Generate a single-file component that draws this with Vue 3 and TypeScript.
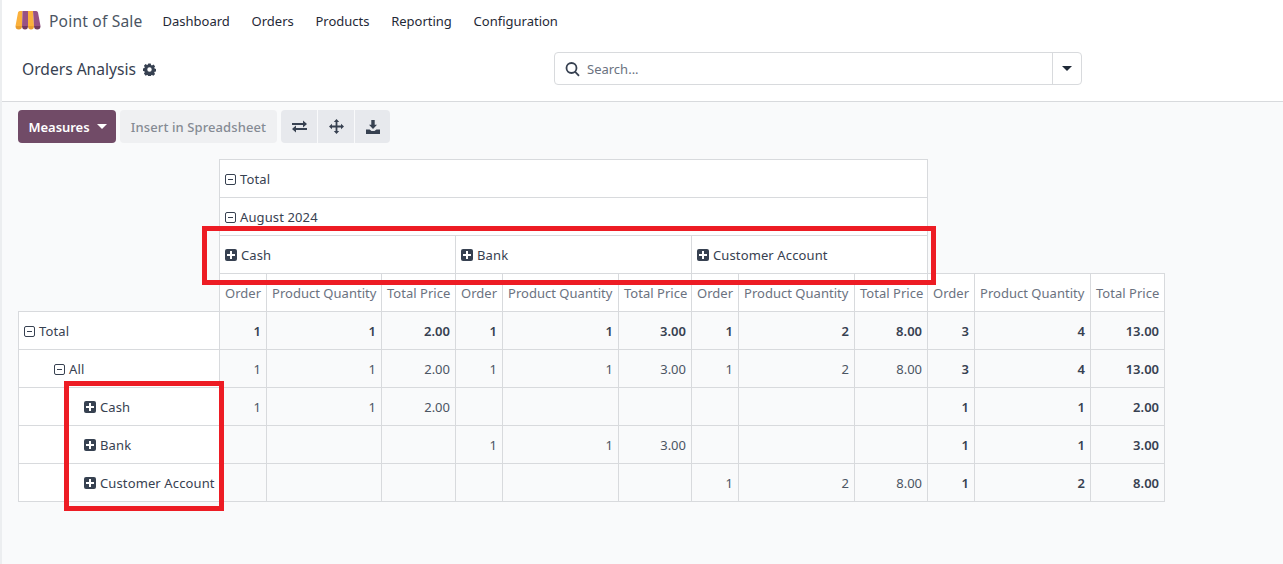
<script setup lang="ts">
interface Row { label: string; indent: string; open: boolean; bold: boolean; values: string[] }
const measures = ['Order', 'Product Quantity', 'Total Price']
const headerCols = [...measures, ...measures, ...measures, ...measures]
const groups = ['Cash', 'Bank', 'Customer Account']
const widths = [201, 47, 115, 74, 47, 116, 73, 47, 116, 73, 47, 116, 74]
const rows: Row[] = [
  { label: 'Total', indent: 'i0', open: true, bold: true, values: ['1','1','2.00','1','1','3.00','1','2','8.00','3','4','13.00'] },
  { label: 'All', indent: 'i1', open: true, bold: false, values: ['1','1','2.00','1','1','3.00','1','2','8.00','3','4','13.00'] },
  { label: 'Cash', indent: 'i2', open: false, bold: false, values: ['1','1','2.00','','','','','','','1','1','2.00'] },
  { label: 'Bank', indent: 'i2', open: false, bold: false, values: ['','','','1','1','3.00','','','','1','1','3.00'] },
  { label: 'Customer Account', indent: 'i2', open: false, bold: false, values: ['','','','','','','1','2','8.00','1','2','8.00'] },
]
</script>

<template>
  <div class="app">
    <header class="topbar">
      <svg class="logo" width="26" height="19" viewBox="0 0 26 19">
        <path d="M5 0h2.500L7 15H0.500L3 1.500A2 2 0 0 1 5 0z" fill="#fbb13c" />
        <path d="M7.500 0H13v15H7z" fill="#985184" />
        <path d="M13 0h5l1 15h-6z" fill="#fbb13c" />
        <path d="M18 0h3a2 2 0 0 1 2 1.500L25.500 15H19z" fill="#985184" />
        <path d="M0.500 15H7a3.250 3.500 0 0 1-6.500 0z" fill="#e99d2e" />
        <path d="M7 15h6a3 3.500 0 0 1-6 0z" fill="#71395f" />
        <path d="M13 15h6a3 3.500 0 0 1-6 0z" fill="#e99d2e" />
        <path d="M19 15h6.500a3.250 3.500 0 0 1-6.500 0z" fill="#71395f" />
      </svg>
      <span class="brand">Point of Sale</span>
      <nav class="menu">
        <span>Dashboard</span><span>Orders</span><span>Products</span><span>Reporting</span><span>Configuration</span>
      </nav>
    </header>

    <section class="panel">
      <div class="title">
        <span>Orders Analysis</span>
        <svg width="13" height="13" viewBox="0 0 14 14" class="gear">
          <path fill="#374151" fill-rule="evenodd" d="M5.700.5h2.600l.4 1.700 1 .4 1.500-.9 1.800 1.800-.9 1.500.4 1 1.700.4v2.600l-1.700.4-.4 1 .9 1.500-1.800 1.800-1.500-.9-1 .4-.4 1.700H5.700l-.4-1.700-1-.4-1.500.9L1 11.400l.9-1.500-.4-1L-.2 8.500V5.900l1.700-.4.4-1L1 3l1.800-1.800 1.500.9 1-.4zM7 4.700a2.400 2.400 0 1 0 0 4.800 2.400 2.400 0 0 0 0-4.800z" />
        </svg>
      </div>
      <div class="search">
        <div class="search-main">
          <svg width="16" height="16" viewBox="0 0 16 16" fill="none" stroke="#374151" stroke-width="1.800">
            <circle cx="6.500" cy="7" r="5" /><path d="M10 10.600 14 14.800" />
          </svg>
          <span>Search...</span>
        </div>
        <div class="search-drop"><i class="caret dark"></i></div>
      </div>
    </section>

    <main class="content">
      <div class="toolbar">
        <button class="btn primary">Measures<i class="caret"></i></button>
        <button class="btn muted">Insert in Spreadsheet</button>
        <div class="btn-group">
          <button class="btn icon">
            <svg width="15" height="13" viewBox="0 0 15 13" fill="#374151"><path d="M0 3h11V0.500L15 4l-4 3.500V5H0zM15 8H4V5.500L0 9l4 3.500V10h11z" /></svg>
          </button>
          <button class="btn icon">
            <svg width="15" height="15" viewBox="0 0 15 15" fill="#374151"><path d="M7.500 0 10.200 3H8.400v3.600H12V4.800L15 7.500 12 10.200V8.400H8.400V12H10.200L7.500 15 4.800 12H6.600V8.400H3V10.200L0 7.500 3 4.800V6.600H6.600V3H4.800z" /></svg>
          </button>
          <button class="btn icon last">
            <svg width="14" height="14" viewBox="0 0 14 14" fill="#374151"><path d="M5.300 0h3.400v4.800H11L7 9 3 4.800h2.300zM0 9.500h3.600L5.500 11h3l1.900-1.500H14V14H0z" /></svg>
          </button>
        </div>
      </div>

      <div class="pivot-wrap">
        <table class="pivot">
          <colgroup><col v-for="(w, i) in widths" :key="i" :style="{ width: w + 'px' }" /></colgroup>
          <thead>
            <tr>
              <th class="blank" rowspan="4"></th>
              <th class="hdr" colspan="9"><i class="tg minus"></i>Total</th>
              <th class="blank" rowspan="3" colspan="3"></th>
            </tr>
            <tr><th class="hdr" colspan="9"><i class="tg minus"></i>August 2024</th></tr>
            <tr>
              <th v-for="g in groups" :key="g" class="hdr" colspan="3"><i class="tg plus"></i>{{ g }}</th>
            </tr>
            <tr>
              <th v-for="(m, i) in headerCols" :key="i" class="measure">{{ m }}</th>
            </tr>
          </thead>
          <tbody>
            <tr v-for="r in rows" :key="r.label">
              <th class="rowhead">
                <span :class="r.indent"><i class="tg" :class="r.open ? 'minus' : 'plus'"></i>{{ r.label }}</span>
              </th>
              <td v-for="(v, i) in r.values" :key="i" :class="{ strong: r.bold || i > 8 }">{{ v }}</td>
            </tr>
          </tbody>
        </table>
        <div class="mark mark-top"></div>
        <div class="mark mark-left"></div>
      </div>
    </main>
  </div>
</template>

<style>
html, body { margin: 0; padding: 0; background: #fff; }
</style>

<style scoped>
.app {
  width: 1283px;
  height: 564px;
  overflow: hidden;
  box-sizing: border-box;
  font-family: "Noto Sans", "Open Sans", sans-serif;
  font-size: 13px;
  color: #374151;
  background: #f9fafb;
  border-left: 2px solid #eceef0;
}
.topbar {
  height: 44px;
  display: flex;
  align-items: center;
  background: #fff;
  padding: 0 0 3px 13px;
  box-sizing: border-box;
}
.logo { flex: none; }
.brand { margin-left: 8px; font-size: 15.600px; letter-spacing: 0.18px; color: #4b5563; }
.menu { display: flex; gap: 21.700px; margin-left: 20px; color: #1f2937; }
.panel {
  height: 58px;
  box-sizing: border-box;
  padding-bottom: 8px;
  background: #fff;
  border-bottom: 1px solid #d8dadd;
  display: flex;
  align-items: center;
}
.title {
  margin-left: 20px;
  display: flex;
  align-items: center;
  gap: 7px;
  font-size: 15.600px;
  color: #374151;
  width: 532px;
}
.gear { margin-top: 1px; }
.search {
  width: 528px;
  height: 33px;
  box-sizing: border-box;
  border: 1px solid #d8dadd;
  border-radius: 4px;
  display: flex;
  background: #fff;
}
.search-main {
  flex: 1;
  display: flex;
  align-items: center;
  gap: 6px;
  padding-left: 10px;
  color: #6b7280;
}
.search-drop {
  width: 28px;
  border-left: 1px solid #d8dadd;
  display: flex;
  align-items: center;
  justify-content: center;
}
.caret {
  display: inline-block;
  width: 0;
  height: 0;
  border-left: 5px solid transparent;
  border-right: 5px solid transparent;
  border-top: 5px solid #fff;
  margin-left: 7px;
  vertical-align: 2px;
}
.caret.dark { border-top-color: #1f2937; margin: 0; }
.content { padding: 8px 0 0 16px; }
.toolbar { display: flex; gap: 4px; height: 33px; }
.btn {
  font: inherit;
  height: 33px;
  border: 0;
  border-radius: 4px;
  display: inline-flex;
  align-items: center;
  font-weight: 500;
}
.primary { background: #714b67; color: #fff; width: 98px; font-weight: 600; letter-spacing: -0.05px; justify-content: center; padding: 0 0 0 1px; }
.muted { background: #eff0f2; color: #858b94; width: 157px; justify-content: center; padding: 0; font-weight: 500; letter-spacing: 0.1px; }
.btn-group { display: flex; gap: 1px; }
.icon { background: #e7e9ed; width: 36px; padding: 0; justify-content: center; border-radius: 0; }
.icon.last { width: 35px; }
.btn-group .icon:first-child { border-radius: 4px 0 0 4px; }
.btn-group .icon:last-child { border-radius: 0 4px 4px 0; }
.pivot-wrap { position: relative; margin-top: 16px; width: 1147px; }
.pivot {
  border-collapse: collapse;
  table-layout: fixed;
  width: 1147px;
}
.pivot th, .pivot td {
  border: 1px solid #d8dadd;
  height: 38px;
  box-sizing: border-box;
  padding: 0 5px;
  font-weight: 400;
  white-space: nowrap;
}
.pivot th.blank { border-top: 0; border-left: 0; background: transparent; }
.pivot th.blank[colspan] { border-right: 0; }
.hdr { text-align: left; background: #fff; color: #374151; letter-spacing: 0.12px; }
.measure { text-align: left; background: #fff; color: #6b7280; letter-spacing: 0.02px; }
.rowhead { text-align: left; background: #fff; color: #374151; letter-spacing: 0.12px; }
.pivot td { text-align: right; background: #f9fafb; color: #4b5563; }
.pivot td.strong { font-weight: 600; color: #374151; }
.i1 { padding-left: 30px; }
.i2 { padding-left: 60px; }
.tg {
  display: inline-block;
  width: 12px;
  height: 12px;
  border-radius: 2px;
  box-sizing: border-box;
  margin-right: 4px;
  vertical-align: -1.500px;
  position: relative;
}
.tg.minus { width: 11px; height: 11px; margin-right: 4px; border: 1px solid #374151; vertical-align: -1px; }
.tg.minus::after {
  content: "";
  position: absolute;
  left: 2px;
  right: 2px;
  top: 4px;
  height: 1px;
  background: #374151;
}
.tg.plus { background: #374151; }
.tg.plus::before, .tg.plus::after {
  content: "";
  position: absolute;
  background: #fff;
}
.tg.plus::before { left: 2px; right: 2px; top: 5px; height: 2px; }
.tg.plus::after { top: 2px; bottom: 2px; left: 5px; width: 2px; }
.mark { position: absolute; border: 5px solid #ed1c24; box-sizing: border-box; pointer-events: none; }
.mark-top { left: 184px; top: 67px; width: 734px; height: 59px; }
.mark-left { left: 46px; top: 222px; width: 160px; height: 130px; }
</style>
